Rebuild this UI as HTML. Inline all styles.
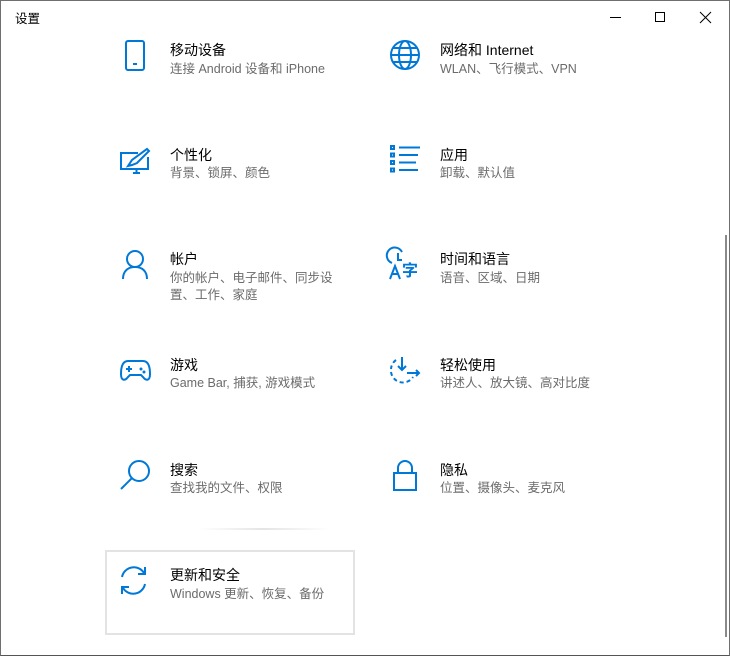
<!DOCTYPE html>
<html><head><meta charset="utf-8"><style>
*{margin:0;padding:0;box-sizing:border-box}
body{width:730px;height:656px;background:#fff;font-family:"Liberation Sans","Noto Sans CJK SC",sans-serif;position:relative;overflow:hidden}
.frame{position:absolute;left:0;top:0;width:730px;height:656px;border:1px solid #6f6f6f;border-bottom-color:#555}
.t{position:absolute;font-size:14px;color:#000;line-height:18px}
.s{position:absolute;font-size:12.5px;color:#6b6b6b;line-height:18px}
svg{position:absolute;overflow:visible}
</style></head><body>
<div class="frame"></div>
<div style="position:absolute;left:15px;top:8px;font-size:12.5px">设置</div>
<!-- window controls -->
<div style="position:absolute;left:610px;top:17px;width:11px;height:1px;background:#000"></div>
<div style="position:absolute;left:655px;top:12px;width:10px;height:10px;border:1px solid #000"></div>
<svg style="left:700px;top:12px" width="11" height="11"><path d="M0 0L11 11M11 0L0 11" stroke="#000" stroke-width="1"/></svg>
<!-- scrollbar -->
<div style="position:absolute;left:725px;top:235px;width:2px;height:402px;background:#8a8a8a"></div>

<!-- phone -->
<svg style="left:125px;top:40px" width="20" height="31"><rect x="1" y="1" width="18" height="29" rx="2" fill="none" stroke="#0078d7" stroke-width="2"/><rect x="8" y="23" width="4" height="2" fill="#0078d7"/></svg>
<div class="t" style="left:170px;top:41px">移动设备</div>
<div class="s" style="left:170px;top:60px">连接 Android 设备和 iPhone</div>

<!-- globe -->
<svg style="left:390px;top:40px" width="30" height="30"><g fill="none" stroke="#0078d7" stroke-width="2"><circle cx="15" cy="15" r="14"/><ellipse cx="15" cy="15" rx="6" ry="14"/><path d="M1 15H29M3 8H27M3 22H27"/></g></svg>
<div class="t" style="left:440px;top:41px">网络和 Internet</div>
<div class="s" style="left:440px;top:60px">WLAN、飞行模式、VPN</div>

<!-- personalization -->
<svg style="left:120px;top:148px" width="30" height="28"><g fill="none" stroke="#0078d7" stroke-width="2"><path d="M18 5H1V21H28V9"/><path d="M13 25H20M16.5 21V25"/><path d="M8 18L12 12L27 1L29 3L17 15L12 17Z"/></g></svg>
<div class="t" style="left:170px;top:146px">个性化</div>
<div class="s" style="left:170px;top:164px">背景、锁屏、颜色</div>

<!-- apps -->
<svg style="left:390px;top:145px" width="30" height="28"><g fill="none" stroke="#0078d7" stroke-width="2"><rect x="1" y="1" width="3" height="3"/><rect x="1" y="8.5" width="3" height="3"/><rect x="1" y="16" width="3" height="3"/><rect x="1" y="23.5" width="3" height="3"/><path d="M9 2.5H30M9 10H28M9 17.5H26M9 25H28"/></g></svg>
<div class="t" style="left:440px;top:146px">应用</div>
<div class="s" style="left:440px;top:164px">卸载、默认值</div>

<!-- account -->
<svg style="left:122px;top:250px" width="26" height="30"><g fill="none" stroke="#0078d7" stroke-width="2"><circle cx="13" cy="9" r="8"/><path d="M1 29C1 21 6 17 13 17S25 21 25 29"/></g></svg>
<div class="t" style="left:170px;top:250px">帐户</div>
<div class="s" style="left:170px;top:269px">你的帐户、电子邮件、同步设</div>
<div class="s" style="left:170px;top:286px">置、工作、家庭</div>

<!-- time language -->
<svg style="left:389px;top:249px" width="32" height="32"><g fill="none" stroke="#0078d7" stroke-width="2"><path d="M13 3A8 8 0 1 0 3 14"/><path d="M9 4V11H13"/><path d="M1 30L6 17L11 30M3 25H9"/></g><text x="13" y="27" font-size="16" fill="#0078d7" font-family="Noto Sans CJK SC,sans-serif" font-weight="bold">字</text></svg>
<div class="t" style="left:440px;top:250px">时间和语言</div>
<div class="s" style="left:440px;top:269px">语音、区域、日期</div>

<!-- game -->
<svg style="left:120px;top:360px" width="31" height="22"><g fill="none" stroke="#0078d7" stroke-width="2"><path d="M8 1H23C28 1 30 6 30 14C30 21 26 21 23 17L21 15H10L8 17C5 21 1 21 1 14C1 6 3 1 8 1Z"/><path d="M6 9H12M9 6V12"/></g><circle cx="21" cy="9" r="1.5" fill="#0078d7"/><circle cx="24" cy="12" r="1.5" fill="#0078d7"/></svg>
<div class="t" style="left:170px;top:356px">游戏</div>
<div class="s" style="left:170px;top:374px">Game Bar, 捕获, 游戏模式</div>

<!-- ease -->
<svg style="left:389px;top:357px" width="32" height="28"><g fill="none" stroke="#0078d7" stroke-width="2"><path d="M7 3A12 12 0 0 0 2 12" stroke-dasharray="4 3"/><path d="M2 15A12 12 0 0 0 24 20" stroke-dasharray="4 3"/><path d="M13 0V13M9 9L13 13L17 9"/><path d="M18 16H30M27 13L30 16L27 19"/></g></svg>
<div class="t" style="left:440px;top:356px">轻松使用</div>
<div class="s" style="left:440px;top:374px">讲述人、放大镜、高对比度</div>

<!-- search -->
<svg style="left:119px;top:460px" width="32" height="30"><g fill="none" stroke="#0078d7" stroke-width="2"><circle cx="20" cy="11" r="10"/><path d="M13 18L2 29"/></g></svg>
<div class="t" style="left:170px;top:461px">搜索</div>
<div class="s" style="left:170px;top:479px">查找我的文件、权限</div>

<!-- privacy -->
<svg style="left:393px;top:460px" width="24" height="31"><g fill="none" stroke="#0078d7" stroke-width="2"><path d="M5 13V8A7 7 0 0 1 19 8V13"/><rect x="1" y="13" width="22" height="17"/></g></svg>
<div class="t" style="left:440px;top:461px">隐私</div>
<div class="s" style="left:440px;top:479px">位置、摄像头、麦克风</div>

<!-- divider shade -->
<div style="position:absolute;left:198px;top:528px;width:132px;height:2px;background:linear-gradient(90deg,#fff,#e4e4e4,#fff)"></div>

<!-- update box -->
<div style="position:absolute;left:105px;top:550px;width:250px;height:85px;border:2px solid #e3e3e3"></div>
<svg style="left:118px;top:565px" width="32" height="31"><g fill="none" stroke="#0078d7" stroke-width="2"><path d="M4 12A12 12 0 0 1 26 8"/><path d="M27 2V9H20"/><path d="M27 19A12 12 0 0 1 5 23"/><path d="M4 29V22H11"/></g></svg>
<div class="t" style="left:170px;top:566px">更新和安全</div>
<div class="s" style="left:170px;top:585px">Windows 更新、恢复、备份</div>
</body></html>
